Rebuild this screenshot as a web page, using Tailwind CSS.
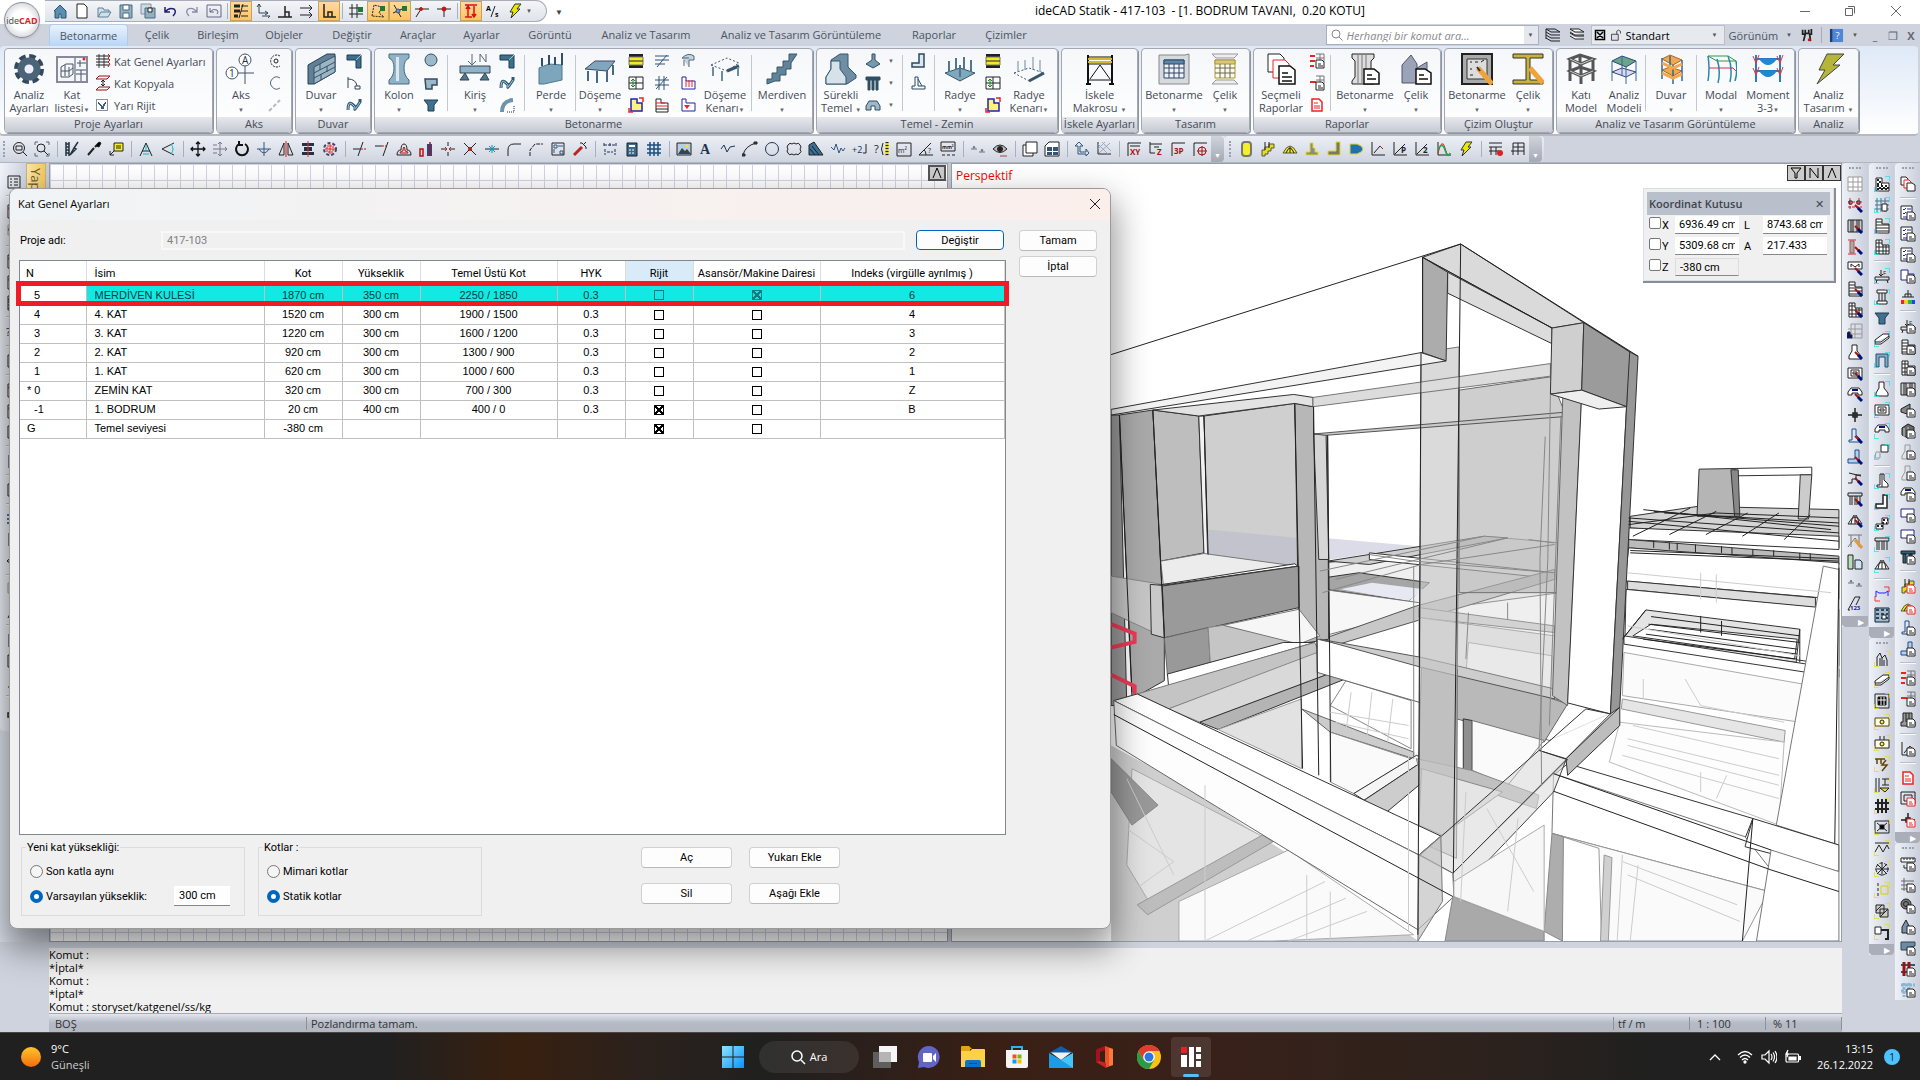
<!DOCTYPE html>
<html lang="tr">
<head>
  <meta charset="UTF-8">
  <meta name="viewport" content="width=device-width, initial-scale=1.0">
  <title>ideCAD Statik - 417-103</title>
  <script src="https://cdn.jsdelivr.net/npm/@tailwindcss/browser@4"></script>
</head>
<body class="h-screen overflow-hidden flex flex-col bg-[#ced3dd] font-['Open_Sans','Noto_Sans',sans-serif] text-[11px] leading-[13px] text-black relative">

  <!-- Title bar -->
  <header class="relative shrink-0">
    <div class="h-6 bg-white flex items-start pl-[45px]">
      <div class="h-[22px] flex items-center pl-1 pr-1 rounded-r-full border border-l-0 border-[#a9adb5] bg-linear-to-b from-[#f4f5f8] to-[#dfe3ea]" data-quick="home new open save saveall undo redo undobox | *layers move3 perp parallel *ortho | gridlock *polylock *snaplock cross1 cross2 | *heights as bolt"></div>
      <button class="ml-2 mt-2 text-[8px] leading-none text-[#444]" aria-label="Özelleştir">▼</button>
      <h1 class="flex-1 text-[12px] leading-[22px] pl-[472px] whitespace-pre">ideCAD Statik - 417-103  - [1. BODRUM TAVANI,  0.20 KOTU]</h1>
      <div class="flex h-[22px] items-center text-[#666]">
        <button class="w-[45px] grid place-items-center" aria-label="Küçült"><svg class="size-3" viewBox="0 0 12 12" fill="none" stroke="currentColor"><path d="M1 6.500h10"/></svg></button>
        <button class="w-[45px] grid place-items-center" aria-label="Geri yükle"><svg class="size-3" viewBox="0 0 12 12" fill="none" stroke="currentColor"><path d="M1.500 3.500h7v7h-7zM4 1.500h6.500v7"/></svg></button>
        <button class="w-[48px] grid place-items-center" aria-label="Kapat"><svg class="size-3" viewBox="0 0 12 12" fill="none" stroke="currentColor"><path d="M1 1l10 10M11 1L1 11"/></svg></button>
      </div>
    </div>
    <button class="absolute left-1 top-[2px] size-9 rounded-full border border-[#8b8f98] bg-radial from-white from-40% to-[#b9bdc6] shadow text-[9px] leading-none text-[#444]">ide<b class="text-[#d22]">CAD</b></button>

    <!-- Ribbon tabs -->
    <nav class="h-[22px] flex items-end pl-[49px] text-[#4b5563] whitespace-nowrap">
      <a href="#betonarme" class="h-[22px] w-[79px] text-center leading-[22px] rounded-t bg-linear-to-b from-[#e9f2fc] to-[#b9d6f6] border border-b-0 border-[#b4cbe6]">Betonarme</a>
      <a href="#celik" class="w-[58px] text-center leading-[22px]">Çelik</a>
      <a href="#birlesim" class="w-16 text-center leading-[22px]">Birleşim</a>
      <a href="#objeler" class="w-[68px] text-center leading-[22px]">Objeler</a>
      <a href="#degistir" class="w-[68px] text-center leading-[22px]">Değiştir</a>
      <a href="#araclar" class="w-16 text-center leading-[22px]">Araçlar</a>
      <a href="#ayarlar" class="w-[63px] text-center leading-[22px]">Ayarlar</a>
      <a href="#goruntu" class="w-[74px] text-center leading-[22px]">Görüntü</a>
      <a href="#analiz" class="w-[118px] text-center leading-[22px]">Analiz ve Tasarım</a>
      <a href="#analiz-goruntuleme" class="w-[192px] text-center leading-[22px]">Analiz ve Tasarım Görüntüleme</a>
      <a href="#raporlar" class="w-[74px] text-center leading-[22px]">Raporlar</a>
      <a href="#cizimler" class="w-[70px] text-center leading-[22px]">Çizimler</a>
      <div class="ml-auto h-[22px] flex items-center text-[#333]">
        <label class="h-5 w-[213px] flex items-center border border-[#aab0bb] bg-white">
          <svg class="size-3 ml-1 text-[#888]" viewBox="0 0 12 12" fill="none" stroke="currentColor"><circle cx="5" cy="5" r="4"/><path d="M8 8l3.500 3.500"/></svg>
          <input type="search" placeholder="Herhangi bir komut ara..." aria-label="Komut ara" class="flex-1 min-w-0 px-1 italic outline-none placeholder:text-[#888]">
          <span class="h-full w-[14px] bg-[#e4e7ed] grid place-items-center text-[6px] text-[#555]">▼</span>
        </label>
        <div class="flex gap-2 px-[6px]"><svg class="size-4" data-i="stackb"></svg><svg class="size-4" data-i="stack"></svg></div>
        <div class="h-5 w-[134px] flex items-center gap-1 px-[2px] bg-[#e6e9ee] border border-[#b9bec8] text-black">
          <svg class="size-3" data-i="xbox"></svg><svg class="size-3" data-i="lock"></svg>
          <select aria-label="Stil" class="flex-1 appearance-none outline-none"><option>Standart</option></select>
          <span class="text-[6px] text-[#555] pr-1">▼</span>
        </div>
        <button class="pl-1 text-[#4b5563]">Görünüm</button><span class="text-[6px] px-2 text-[#555]">▼</span>
        <svg class="size-[14px]" data-i="tools"></svg>
        <span class="mx-[7px] w-px h-4 bg-[#aab]"></span>
        <svg class="size-[15px]" data-i="help"></svg><span class="text-[6px] px-2 text-[#555]">▼</span>
        <button class="w-[18px] font-bold text-[#667]" aria-label="Alt pencere küçült">_</button>
        <button class="w-[18px] text-[#667]" aria-label="Alt pencere geri yükle">❐</button>
        <button class="w-[18px] font-bold text-[#667]" aria-label="Alt pencere kapat">X</button>
      </div>
    </nav>

    <!-- Ribbon groups -->
    <div id="ribbon" class="h-[90px] mr-[2px] flex gap-[3px] items-start pl-1 pt-[2px] rounded bg-linear-to-b from-[#dfe9f7] to-white border-b-2 border-[#b5b9c1] text-[#444b55] whitespace-nowrap"></div>

    <!-- Tool strips -->
    <div class="h-[27px] flex items-center bg-[#ced3dd] border-b border-[#b0b5bf]">
      <div class="h-[26px] flex items-center rounded-r bg-linear-to-b from-[#eceff6] to-[#cfd5e0]" data-bar="zoomin zoomwin | pickbrush dropper note | compass eye | move movegrid rotate rotaxis mirror align explode | trim extend offset mark breakx breakc breakp fillet fillet2 region wand | dims calc grid | image letter poly arc circle cloud hatch zigzag plus2 ask sqm angle mm2 | level eye2 | copy1 copy4 | arrowup meshx | dXY dZ d3P dC"></div>
      <div class="h-[26px] flex items-center rounded-r bg-linear-to-b from-[#eceff6] to-[#cfd5e0]" data-bar="ycol ystair ydome yfound ywall ybody gr1 gr2 gr3 gr4 bolt | tred table"></div>
    </div>
  </header>

  <!-- Work area -->
  <main class="flex-1 min-h-0 flex">
    <div class="flex-1 min-w-0 flex flex-col">
      <div class="flex-1 min-h-0 flex">
        <aside class="w-[49px] shrink-0 flex bg-linear-to-r from-[#dde2ec] to-[#c6cbd6]">
          <div class="w-[26px] h-[568px] flex flex-col items-center pl-[2px] pt-2 rounded-b bg-linear-to-r from-[#f0f3f9] to-[#cdd3df]" data-col="list - chk:r slabg:r - chk:r chk:r slab:r - ask - list - chk:r chk:r list - calc - list - grid tree eye2 - slabg compass - calc list pier - wall:doc"></div>
          <div class="w-5 h-28 border border-[#c9b27a] bg-linear-to-r from-[#fbe6a6] to-[#f3c95f] text-[13px] leading-[18px] text-[#6b5a2c] [writing-mode:vertical-rl] whitespace-nowrap pt-1">Yapı denetimi</div>
        </aside>
        <section class="flex-1 min-w-0 flex gap-[3px] bg-[#c3c8d2]">
          <div class="w-[899px] border border-[#989da8] bg-white bg-[linear-gradient(to_right,#d3d3e6_1px,transparent_1px),linear-gradient(to_bottom,#d3d3e6_1px,transparent_1px)] bg-[size:13px_16px] flex justify-end p-[1px]">
            <button class="w-[18px] h-4 border-2 border-[#555] bg-[#ccc] grid place-items-center" aria-label="Büyüt"><svg class="size-3" viewBox="0 0 12 12" fill="none" stroke="#000"><path d="M2 11L6 1l4 10"/></svg></button>
          </div>
          <div class="flex-1 min-w-0 relative border border-[#989da8] bg-white overflow-hidden">
            <svg id="model" class="absolute inset-0 size-full" viewBox="-285 9 1704 2340" preserveAspectRatio="none" fill="none" stroke="#222" aria-label="Perspektif model"></svg>
            <p class="absolute left-1 top-[5px] text-[12px] text-[#f00]">Perspektif</p>
            <div class="absolute right-0 top-[1px] flex">
              <button class="w-[18px] h-4 border border-[#333] bg-[#ccc] grid place-items-center" aria-label="Filtre"><svg class="size-3" viewBox="0 0 12 12" fill="none" stroke="#000"><path d="M1 1h10L7 6v5H5V6z"/></svg></button>
              <button class="w-[18px] h-4 border border-[#333] bg-[#ccc] grid place-items-center" aria-label="Normal"><svg class="size-3" viewBox="0 0 12 12" fill="none" stroke="#000"><path d="M2 11V1l8 10V1"/></svg></button>
              <button class="w-[18px] h-4 border border-[#333] bg-[#ccc] grid place-items-center" aria-label="Büyüt"><svg class="size-3" viewBox="0 0 12 12" fill="none" stroke="#000"><path d="M2 11L6 1l4 10"/></svg></button>
            </div>
            <!-- Coordinate box -->
            <div class="absolute right-[7px] top-6 w-[191px] h-[93px] p-[3px] bg-[#f0f0f0] border border-[#d8dfea] shadow-[1px_1px_0_1px_#888d96]">
              <div class="h-[23px] px-[2px] flex items-center justify-between bg-[#b9c0cc] font-semibold text-[#40444c]"><span>Koordinat Kutusu</span><button class="pr-1 font-normal" aria-label="Kutuyu kapat">✕</button></div>
              <div class="grid grid-cols-[12px_14px_64px_24px_64px] items-center gap-y-[3px] pl-[2px] pt-[1px] font-[Roboto,sans-serif]">
                <input id="cx" type="checkbox" class="appearance-none size-3 border border-[#777] rounded-xs bg-white -mt-1"><label for="cx" class="pl-px">X</label><input aria-label="X" value="6936.49 cm" class="h-[18px] px-1 min-w-0 bg-white border-b border-[#888]"><label for="cl" class="pl-[5px]">L</label><input id="cl" value="8743.68 cm" class="h-[18px] px-1 min-w-0 bg-white border-b border-[#888]">
                <input id="cy" type="checkbox" class="appearance-none size-3 border border-[#777] rounded-xs bg-white -mt-1"><label for="cy" class="pl-px">Y</label><input aria-label="Y" value="5309.68 cm" class="h-[18px] px-1 min-w-0 bg-white border-b border-[#888]"><label for="ca" class="pl-[5px]">A</label><input id="ca" value="217.433" class="h-[18px] px-1 min-w-0 bg-white border-b border-[#888]">
                <input id="cz" type="checkbox" class="appearance-none size-3 border border-[#777] rounded-xs bg-white -mt-1"><label for="cz" class="pl-px">Z</label><input aria-label="Z" value="-380 cm" class="h-[18px] px-1 min-w-0 bg-[#f0f0f0] border border-[#ddd] border-b-[#888]">
              </div>
            </div>
          </div>
        </section>
      </div>
      <!-- Command log and status bar -->
      <div class="h-[65px] shrink-0 ml-[49px] mt-[6px] bg-[#f0f0f0]">
        <p>Komut :</p><p>*İptal*</p><p>Komut :</p><p>*İptal*</p><p>Komut : storyset/katgenel/ss/kg</p>
      </div>
      <footer class="h-[19px] shrink-0 ml-[49px] flex items-center border-t border-[#a5a9b3] bg-linear-to-b from-[#e3e6ed] via-[#b4bac6] to-[#b3b8c0] text-[#333]">
        <span class="w-[258px] pl-[6px] border-r border-[#8d929c]">BOŞ</span>
        <span class="flex-1 pl-1">Pozlandırma tamam.</span>
        <span class="w-[76px] pl-1 border-l border-[#8d929c]">tf / m</span>
        <span class="w-[76px] pl-[7px] border-l border-[#8d929c]">1 : 100</span>
        <span class="w-[77px] pl-[7px] border-x border-[#8d929c]">% 11</span>
      </footer>
    </div>
    <aside class="flex shrink-0 items-start gap-[1px] w-[78px]">
      <div class="w-[26px] flex flex-col items-center rounded-t bg-linear-to-r from-[#eef1f7] to-[#c9cfdb]" data-col=": tableg chkr:brush colg:brush redcol:brush beam:brush slab:brush mesh:brush tableb footing:brush raft:brush cap:brush plus pierb:brush wallb:brush stair:brush pile:brush dome:brush truss half level num ]"></div>
      <div class="w-[25px] flex flex-col items-center">
        <div class="w-full flex flex-col items-center rounded-t bg-linear-to-r from-[#eef1f7] to-[#c9cfdb]" data-col=": chk:cy meshc:cy slab:cy mesh:cy - beamF:cy colm:cy funnel beam3:cy gate:cy - footing:cy raft:cy cap:cy step:cy - pier:cy wall:cy chk2:cy pile:cy dome:cy - polyr chkc ]"></div>
        <div class="w-full flex flex-col items-center rounded-t bg-linear-to-r from-[#eef1f7] to-[#c9cfdb]" data-col=": towers:ye beam3:ye meshk:ye plate:ye plate2:ye wel:ye ibeam:ye rail:ye xbase:ye zig:ye star:ye dash:ye hatch2:ye hammer:ye ]"></div>
      </div>
      <div class="w-[25px] flex flex-col items-center">
        <div class="w-full flex flex-col items-center rounded-t bg-linear-to-r from-[#eef1f7] to-[#c9cfdb]" data-col=": docs - tick:doc tick:doc tick:doc lshape:doc rainbow - beamF:doc slab:doc mesh:doc colg:doc cone:doc barrel:doc footg:doc footg:doc cap:doc rect:doc rect:doc pileb:doc - ystair:rdoc ydome:rdoc pierb:doc wallb:doc - redarr:doc redarr1:doc cyl:doc - gr1:doc - rdoc rect2:rdoc plus:rdoc ]"></div>
        <div class="w-full flex flex-col items-center rounded-t bg-linear-to-r from-[#eef1f7] to-[#c9cfdb]" data-col=": ruler:doc arrows:doc disc:doc towerb:doc pipe:doc gridr:doc gridb:doc"></div>
      </div>
    </aside>
  </main>

  <!-- Storey settings dialog -->
  <section role="dialog" aria-label="Kat Genel Ayarları" class="absolute left-[9px] top-[188px] w-[1102px] rounded-lg border border-[#9a9a9a] bg-[#f0f0f0] shadow-[0_16px_34px_4px_rgba(0,0,0,0.42)] overflow-hidden text-black font-[Roboto,sans-serif]">
    <div class="h-[31px] flex items-center justify-between px-2 pb-[2px] bg-linear-to-r from-[#f0f4f6] to-[#fbefec]">
      <h2 class="font-['Open_Sans',sans-serif]">Kat Genel Ayarları</h2>
      <button class="pr-[1px]" aria-label="Kapat"><svg class="size-3" viewBox="0 0 12 12" fill="none" stroke="#222"><path d="M1 1l10 10M11 1L1 11"/></svg></button>
    </div>
    <div class="flex pt-[10px] pl-[9px]">
      <div class="w-[987px]">
        <div class="flex items-center h-5">
          <label for="proje" class="w-[142px] pl-[1px]">Proje adı:</label>
          <input id="proje" value="417-103" disabled class="h-[19px] flex-1 px-1 text-[#808080] bg-[#f0f0f0] border-2 border-[#f8f8f8]">
          <button class="ml-[11px] mr-[2px] w-[88px] h-5 rounded-[4px] border border-[#0067c0] bg-[#fdfdfd]">Değiştir</button>
        </div>
        <div class="relative mt-[10px] h-[575px] border border-[#828790] bg-white">
          <table class="table-fixed w-[984px] border-collapse">
            <colgroup><col class="w-[66px]"><col class="w-[178px]"><col class="w-[78px]"><col class="w-[78px]"><col class="w-[137px]"><col class="w-[68px]"><col class="w-[68px]"><col class="w-[127px]"><col class="w-[184px]"></colgroup>
            <thead>
              <tr class="h-[25px] [&>th]:font-normal [&>th]:border-r [&>th]:border-[#dcdcdc]">
                <th class="text-left pl-[6px]">N</th><th class="text-left pl-2">İsim</th><th>Kot</th><th>Yükseklik</th><th>Temel Üstü Kot</th><th>HYK</th><th class="bg-[#d9eaf8]">Rijit</th><th>Asansör/Makine Dairesi</th><th>Indeks (virgülle ayrılmış )</th>
              </tr>
            </thead>
            <tbody id="floors" class="font-['Liberation_Sans',sans-serif] text-center"></tbody>
          </table>
          <div class="absolute -left-1 -right-1 top-5 h-[25px] border-[5px] border-[#f01b24] pointer-events-none"></div>
        </div>
      </div>
      <div class="ml-[13px] w-[78px] flex flex-col gap-[5px]">
        <button class="h-[21px] rounded-[4px] border border-[#d0d0d0] border-b-[#b8b8b8] bg-[#fdfdfd]">Tamam</button>
        <button class="h-[21px] rounded-[4px] border border-[#d0d0d0] border-b-[#b8b8b8] bg-[#fdfdfd]">İptal</button>
      </div>
    </div>
    <div class="flex pl-[11px] pt-[6px] pb-3">
      <fieldset class="w-[224px] h-[75px] border border-[#dcdcdc] pl-2">
        <legend class="px-[1px] -ml-1">Yeni kat yüksekliği:</legend>
        <label class="flex items-center gap-[3px] h-[18px] mt-[8px]"><input type="radio" name="yuk" class="appearance-none size-[13px] rounded-full border border-[#777] bg-[#f5f5f5]">Son katla aynı</label>
        <div class="flex items-center mt-[6px] h-[20px]">
          <label class="flex items-center gap-[3px] w-[144px]"><input type="radio" name="yuk" checked class="appearance-none size-[13px] rounded-full border-4 border-[#0067c0] bg-white">Varsayılan yükseklik:</label>
          <input aria-label="Varsayılan yükseklik" value="300 cm" class="w-14 h-5 px-[5px] bg-white border-b border-[#868686]">
        </div>
      </fieldset>
      <fieldset class="ml-[13px] w-[224px] h-[75px] border border-[#dcdcdc] pl-2">
        <legend class="px-[1px] -ml-1">Kotlar :</legend>
        <label class="flex items-center gap-[3px] h-[18px] mt-[8px]"><input type="radio" name="kot" class="appearance-none size-[13px] rounded-full border border-[#777] bg-[#f5f5f5]">Mimari kotlar</label>
        <label class="flex items-center gap-[3px] mt-[6px] h-5"><input type="radio" name="kot" checked class="appearance-none size-[13px] rounded-full border-4 border-[#0067c0] bg-white">Statik kotlar</label>
      </fieldset>
      <div class="ml-[159px] mt-[6px] grid grid-cols-[91px_91px] auto-rows-[21px] gap-x-[17px] gap-y-[15px]">
        <button class="rounded-[4px] border border-[#d0d0d0] border-b-[#b8b8b8] bg-[#fdfdfd]">Aç</button>
        <button class="rounded-[4px] border border-[#d0d0d0] border-b-[#b8b8b8] bg-[#fdfdfd]">Yukarı Ekle</button>
        <button class="rounded-[4px] border border-[#d0d0d0] border-b-[#b8b8b8] bg-[#fdfdfd]">Sil</button>
        <button class="rounded-[4px] border border-[#d0d0d0] border-b-[#b8b8b8] bg-[#fdfdfd]">Aşağı Ekle</button>
      </div>
    </div>
  </section>

  <!-- Taskbar -->
  <div class="h-12 shrink-0 flex items-center border-t border-[#4a4442] text-white text-[11px] leading-4 bg-[linear-gradient(to_right,#202020_0%,#202020_20%,#38200f_27%,#2c211c_33%,#202020_40%,#3a1f14_52%,#38211a_64%,#2c221d_78%,#202020_86%)]">
    <div class="flex-1 flex items-center pl-[21px] gap-[10px]">
      <span class="size-5 rounded-full bg-linear-to-b from-[#fdc52c] to-[#f26a0c]"></span>
      <p>9°C<br><span class="text-[#ccc]">Güneşli</span></p>
    </div>
    <div class="flex items-center">
      <button class="w-11 h-10 grid place-items-center" aria-label="Başlat"><svg class="size-6" viewBox="0 0 24 24"><defs><linearGradient id="w" x2="1" y2="1"><stop stop-color="#8be4ff"/><stop offset="1" stop-color="#0a93ff"/></linearGradient></defs><path fill="url(#w)" d="M1 1h10.500v10.500H1zM12.500 1H23v10.500H12.500zM1 12.500h10.500V23H1zM12.500 12.500H23V23H12.500z"/></svg></button>
      <button class="mx-1 w-[100px] h-8 rounded-full bg-white/8 flex items-center justify-center gap-1"><svg class="size-4" viewBox="0 0 16 16" fill="none" stroke="#fff" stroke-width="1.500"><circle cx="7" cy="7" r="5"/><path d="M11 11l4 4"/></svg>Ara</button>
      <button class="w-11 h-10 grid place-items-center" aria-label="Görev görünümü"><svg class="size-6" viewBox="0 0 24 24"><path fill="#f6f6f6" d="M6 1h18v16H6z"/><path fill="#6a6a6a" fill-opacity=".85" d="M0 7h18v16H0z"/><path fill="#b5b5b5" d="M6 7h12v10H6z"/></svg></button>
      <button class="w-11 h-10 grid place-items-center" aria-label="Sohbet"><svg class="size-6" viewBox="0 0 24 24"><path fill="#6264c7" d="M12 1a11 11 0 1 1-5 21L1 23l1-6A11 11 0 0 1 12 1z"/><rect x="6" y="8" width="9" height="9" rx="1" fill="#fff"/><path fill="#fff" d="M16 11l3-3v9l-3-3z"/></svg></button>
      <button class="w-11 h-10 grid place-items-center" aria-label="Dosya Gezgini"><svg class="size-6" viewBox="0 0 24 24"><path fill="#e5a50a" d="M0 2q0-1 1-1h7l3 3h-2v4H0z"/><path fill="#ffd04a" d="M0 6h9l2-2h12q1 0 1 1v17H0z"/><path fill="#0c74c6" d="M4 22v-5q0-2 2-2h12q2 0 2 2v5z"/><path fill="#0a4f92" d="M8 18h8v1H8z"/></svg></button>
      <button class="w-11 h-10 grid place-items-center" aria-label="Mağaza"><svg class="size-6" viewBox="0 0 24 24"><path fill="none" stroke="#29b6f0" stroke-width="2" d="M7 7V2h10v5"/><path fill="#f4f4f4" d="M1 5h22v16q0 2-2 2H3q-2 0-2-2z"/><path fill="#f25022" d="M7.500 9.500h4v4h-4z"/><path fill="#7fba00" d="M12.500 9.500h4v4h-4z"/><path fill="#00a4ef" d="M7.500 14.500h4v4h-4z"/><path fill="#ffb900" d="M12.500 14.500h4v4h-4z"/></svg></button>
      <button class="w-11 h-10 grid place-items-center" aria-label="Posta"><svg class="size-6" viewBox="0 0 24 24"><path fill="#0b5fae" d="M0 8l12-7 12 7z"/><path fill="#f2f2f2" d="M2 7.500h20L12 15z"/><path fill="#1c9be6" d="M0 8l12 7 12-7v15H0z"/><path fill="#45c5f7" d="M24 8v15L12 15z"/></svg></button>
      <button class="w-11 h-10 grid place-items-center" aria-label="Office"><svg class="size-6" viewBox="0 0 24 24"><path fill="#a4121e" d="M12 1L4 4q-1 1-1 2v11l4 2V7l5-2z"/><path fill="#e8532b" d="M12 1l8 3v16l-8 3z"/><path fill="#ff7a3a" d="M16 3l4 1v16l-4 1z"/><path fill="#c22" d="M3 17l4-1 6 2v5z"/></svg></button>
      <button class="w-11 h-10 grid place-items-center" aria-label="Chrome"><svg class="size-6" viewBox="0 0 24 24"><circle cx="12" cy="12" r="12" fill="#fbc116"/><path fill="#e33b2e" d="M1.600 6A12 12 0 0 1 22.400 6H12L6.800 15z"/><path fill="#2a9a44" d="M1.600 6A12 12 0 0 0 12 24l5.200-9H6.800z"/><circle cx="12" cy="12" r="5.800" fill="#fff"/><circle cx="12" cy="12" r="4.500" fill="#2f76e0"/></svg></button>
      <button class="w-10 h-10 rounded bg-white/10 grid place-items-center relative" aria-label="ideCAD"><svg class="size-5" viewBox="0 0 20 20"><path fill="#e8202a" d="M0 0h6v6H0z"/><path fill="#fff" d="M0 8h6v12H0zM8 0h5v20H8zM15 0h5v5h-5zM15 7h5v5h-5zM15 14h5v6h-5z"/></svg><span class="absolute bottom-0 w-4 h-[3px] rounded bg-[#4cc2ff]"></span></button>
    </div>
    <div class="flex-1 flex items-center justify-end gap-2 pr-5">
      <svg class="w-3 h-3 mr-2" viewBox="0 0 12 12" fill="none" stroke="#fff" stroke-width="1.300"><path d="M1 9l5-5 5 5"/></svg>
      <svg class="size-4" viewBox="0 0 16 16" fill="none" stroke="#fff" stroke-width="1.300"><path d="M1 6q7-7 14 0M3 8.500q5-5 10 0M5 11q3-3 6 0"/><circle cx="8" cy="13" r="1" fill="#fff"/></svg>
      <svg class="size-4" viewBox="0 0 16 16" fill="none" stroke="#fff" stroke-width="1.200"><path d="M1 6h3l4-4v12l-4-4H1zM10 5q2 3 0 6M12 3.500q3 4.500 0 9M14 2q4 6 0 12"/></svg>
      <svg class="size-4 mr-2" viewBox="0 0 16 16" fill="none" stroke="#fff" stroke-width="1.200"><rect x="1" y="5" width="12.500" height="8" rx="1"/><path fill="#fff" d="M4 8h7v3H4zM14 7.500h1.500v3H14zM3 1L1 5h2l-1 3"/></svg>
      <p class="text-right mr-[3px]">13:15<br>26.12.2022</p>
      <span class="size-4 rounded-full bg-[#4cc2ff] text-[#123] text-[10px] text-center leading-4">1</span>
    </div>
  </div>

  <script>
    // Small icons, 16 x 16
    const ICON = {
      home: '<path d="M2 8l6-6 6 6v7H9v-4H7v4H3V8z" fill="#5b8fb0" stroke="#2d5570"/>',
      new: '<path d="M3 1h7l3 3v11H3z" fill="#fff"/>',
      open: '<path d="M2 14V5h5l1 2h5v2M2 14l3-5h10l-3 5z" fill="#cfe0ea" stroke="#5c8096"/>',
      save: '<path d="M2 2h12v13H2z" fill="#93b0c2" stroke="#4b6b80"/><path d="M5 2h6v5H5zM5 10h6v5H5z" fill="#fff" stroke="#4b6b80"/>',
      saveall: '<path d="M1 1h10v10H1z" fill="#cfdbe4" stroke="#7b96a8"/><path d="M5 5h10v10H5z" fill="#93b0c2" stroke="#4b6b80"/><path d="M8 5h4v4H8z" fill="#fff"/>',
      undo: '<path d="M3 4v5h5M3 9q4-5 9-3 3 3-1 7" stroke="#20206e" stroke-width="1.500"/>',
      redo: '<path d="M13 4v5H8M13 9Q9 4 4 6q-3 3 1 7" stroke="#8b8ba8" stroke-width="1.300"/>',
      undobox: '<path d="M1 2h14v12H1z" stroke="#668"/><path d="M4 5v4h4M4 9q3-4 7-2 2 2 0 4" stroke="#668"/>',
      layers: '<path d="M1 3h6M1 8h6M1 13h4" stroke-width="3"/><path d="M8 3h7M8 8h7M8 13h7M10 1L6 15"/>',
      move3: '<path d="M4 10V1M2 4l2-3 2 3M4 10h9M10 8l3 2-3 2M7 13h8l-2 2" stroke="#345"/>',
      perp: '<path d="M1 14h14M8 3v11M8 9h4v5" stroke-width="1.500"/>',
      parallel: '<path d="M1 5h12M10 2l3 3-3 3M1 12h12M10 9l3 3-3 3"/>',
      ortho: '<path d="M3 1v13h12M7 14V9h4v5" stroke-width="1.500"/>',
      gridlock: '<path d="M4 1v14M9 1v14M1 5h14M1 11h14"/><path d="M10 4h5v5h-5z" fill="#1a7a3a" stroke="none"/>',
      polylock: '<path d="M2 13L4 2l8 2-3 6 5 4z" stroke-dasharray="2 1"/><path d="M10 3h5v5h-5z" fill="#1a7a3a" stroke="none"/>',
      snaplock: '<path d="M2 2l7 12M1 10l9-4"/><circle cx="6" cy="8" r="2" fill="#69c" stroke="#357"/><path d="M10 3h5v5h-5z" fill="#1a7a3a" stroke="none"/>',
      cross1: '<path d="M1 6h14M2 14l5-8"/><circle cx="7" cy="6" r="1.500" fill="#c11" stroke="#c11"/>',
      cross2: '<path d="M1 6h14M8 6v8"/><circle cx="8" cy="6" r="2" fill="#c11" stroke="#c11"/>',
      heights: '<path d="M2 2h12M2 14h7M5 14V3M3 6l2-3 2 3M11 3v11M9 11l2 3 2-3" stroke="#d11" stroke-width="1.500"/>',
      as: '<path d="M10 3L6 14"/><text x="1" y="8" font-size="7" font-weight="bold" fill="#000" stroke="none">A</text><text x="10" y="14" font-size="7" font-weight="bold" fill="#000" stroke="none">s</text>',
      bolt: '<path d="M8 1h6l-4 5h3L4 15l2-6H3z" fill="#e8e800" stroke="#333"/>',
      stack: '<path d="M1 2h9l5 3H6zM1 6l5 3h9M1 9l5 3h9M1 5l5 3h9" fill="#fff"/>',
      stackb: '<path d="M1 2h9l5 3H6zM1 5l5 3h9M1 8l5 3h9M1 11l5 3h9M1 2v10" fill="#bcd0e6"/>',
      xbox: '<path d="M2 2h12v12H2zM4 4l8 8M12 4l-8 8" stroke="#000" stroke-width="2"/>',
      lock: '<path d="M2 7h9v8H2z" fill="#dde"/><path d="M9 7V3q2-3 5 0v3"/>',
      tools: '<path d="M3 2v5h3l-2 8M6 2v4h4V2M13 1v6h-2l1 8" stroke-width="2"/><path d="M9 12h3v3H9z" fill="#d11" stroke="none"/>',
      help: '<path d="M1 1h3v14H1z" fill="#1c3e7a" stroke="none"/><path d="M4 1h11v14H4z" fill="#4f86d8" stroke="none"/><text x="7" y="12" font-size="10" fill="#fff" stroke="none">?</text>',
      zoomin: '<circle cx="7" cy="7" r="5.500"/><path d="M11 11l4 4M4 5h6v4H4z"/>',
      zoomwin: '<path d="M1 4V1h3M12 1h3v3M15 12v3h-3M4 15H1v-3" stroke="#567"/><circle cx="7" cy="7" r="4"/><path d="M10 10l4 4"/>',
      pickbrush: '<path d="M2 1v14M5 1v14M2 3h3M2 6h3M2 9h3M2 12h3M14 1l-4 6M6 14l4-7 2 1z" stroke="#234" stroke-width="1.500"/>',
      dropper: '<path d="M2 14l6-7M9 6l4-4" stroke-width="2"/><path d="M10 5l3 1 2-4-2-1z" fill="#000"/>',
      note: '<path d="M6 2h9v8H6z" fill="#f7ee2e"/><path d="M8 5h5M8 7h5M6 10l-4 4M2 10v4h4"/>',
      compass: '<path d="M8 2L2 15M8 2l6 13M4 10h8"/><path d="M8 4v6M5 13h6" stroke="#0bc"/>',
      eye: '<path d="M14 2L2 8l12 6"/><path d="M11 3q4 5 0 10" stroke="#0bc"/>',
      move: '<path d="M8 1v14M1 8h14M6 3l2-2 2 2M6 13l2 2 2-2M3 6L1 8l2 2M13 6l2 2-2 2" stroke="#111" stroke-width="1.300"/>',
      movegrid: '<path d="M8 1v14M1 8h14M1 4h4M1 12h4M6 3l2-2 2 2M6 13l2 2 2-2M13 6l2 2-2 2" stroke="#778"/>',
      rotate: '<path d="M5 3a6 6 0 1 0 6 0M5 0v4h4" stroke="#111" stroke-width="2"/>',
      rotaxis: '<path d="M8 1v14M1 8h14M3 8q5 8 10 0" stroke="#357"/>',
      mirror: '<path d="M6 2v12H1zM10 2v12h5z"/><path d="M8 0v16" stroke="#d11"/>',
      align: '<path d="M2 2h12v3H2zM2 11h12v3H2zM4 6h8v4H4z" fill="#234" stroke="none"/><path d="M8 0v16" stroke="#f22"/>',
      explode: '<circle cx="8" cy="8" r="6" stroke="#446" stroke-width="2" stroke-dasharray="3 2"/><path d="M5 5h6v6H5z" stroke="#e22" stroke-dasharray="2 1"/><path d="M8 3v10M3 8h10" stroke="#e22"/>',
      trim: '<path d="M1 8h7M11 1L6 15"/><path d="M9 8h6" stroke="#b11" stroke-dasharray="2 1"/>',
      extend: '<path d="M1 5h7M14 1L9 15"/><path d="M8 5h4" stroke="#b11" stroke-dasharray="2 1"/>',
      offset: '<path d="M1 14q0-5 4-5 0-6 3-6t3 6q4 0 4 5z"/><path d="M4 12q0-2 3-2 0-4 1-4t1 4q3 0 3 2z" stroke="#b11"/>',
      mark: '<path d="M9 3h5v12H9z" fill="#224a8a" stroke="none"/><path d="M2 8v7h3V8zM12 1v14" stroke="#b11" stroke-width="1.500"/>',
      breakx: '<path d="M1 8h5M10 8h5M8 1v4M8 11v4"/><path d="M5 6l2 2-2 2M11 6L9 8l2 2" stroke="#b22"/>',
      breakc: '<path d="M2 2l12 12M14 2L2 14"/><circle cx="8" cy="8" r="1.500" fill="#b22" stroke="#b22"/>',
      breakp: '<path d="M1 8h14"/><path d="M5 5l6 6M11 5l-6 6M8 4v8" stroke="#09b"/>',
      fillet: '<path d="M2 15V9q0-6 6-6h7"/>', fillet2: '<path d="M2 15V9l5-6h8" stroke-dasharray="4 1"/>',
      region: '<path d="M2 2h12v12H2z"/><path d="M4 4h3v3H4zM10 10h3v3h-3zM4 12V8M8 5h5" stroke="#357"/>',
      wand: '<path d="M2 14l8-8" stroke="#b22" stroke-width="3"/><path d="M10 2l4 4M14 1l-3 3M9 1v2M15 7h-2"/>',
      dims: '<path d="M2 4h12M2 2v4M8 2v4M14 2v4M3 8v6M13 8v6M5 11h6" stroke="#235" stroke-dasharray="3 1"/>',
      calc: '<path d="M3 2h10v13H3z" fill="#3d6a8a" stroke="#123"/><path d="M5 4h6v2H5z" fill="#fff" stroke="none"/><path d="M5 9h6M5 12h6" stroke="#fff" stroke-dasharray="2 1"/>',
      grid: '<path d="M4 1v14M8 1v14M12 1v14M1 4h14M1 8h14M1 12h14" stroke="#1c4f7c" stroke-width="1.500"/>',
      image: '<path d="M1 2h14v12H1z" fill="#b9cfe0"/><path d="M2 13l4-6 3 3 2-2 4 5z" fill="#345" stroke="none"/><circle cx="11" cy="5" r="1.500" fill="#fd3" stroke="none"/>',
      letter: '<text x="2" y="13" font-size="14" font-weight="bold" font-family="Liberation Serif" fill="#1c3550" stroke="none">A</text>',
      poly: '<path d="M1 8l3-4 3 7 3-5 5-1" stroke="#235"/>', arc: '<path d="M1 14Q3 5 14 2"/><path d="M0 13h3v2H0zM12 1h3v2h-3z" fill="#357"/>',
      circle: '<circle cx="8" cy="8" r="6.500" stroke="#235"/>',
      cloud: '<path d="M2 4q2-3 4-1 2-2 4 0 3-2 4 1 2 2 0 4 2 3 0 4-2 3-4 1-2 2-4 0-3 2-4-1-2-2 0-4-2-2 0-4z"/>',
      hatch: '<path d="M1 4l5-3 9 13H1z" fill="#3e6f91"/><path d="M2 8l5 6M4 5l7 9" stroke="#123"/>',
      zigzag: '<path d="M1 6l3 3 2-6 3 9 2-5 2 3 2-3" stroke="#357"/>',
      plus2: '<text x="0" y="12" font-size="9" fill="#235" stroke="none">+2</text><path d="M14 3v9h-3"/>',
      ask: '<text x="0" y="12" font-size="11" fill="#222" stroke="none">?</text><path d="M9 2q-3 6 0 12"/><path d="M13 1v14" stroke="#e5d600" stroke-width="3"/><path d="M13 1v14" stroke-dasharray="1 2" stroke-width="3"/>',
      sqm: '<path d="M1 2h14v13H1z"/><text x="2" y="12" font-size="7" fill="#222" stroke="none">m²</text>',
      angle: '<path d="M1 14h14M1 14L13 2M8 14q0-4-2-5"/><text x="10" y="12" font-size="7" fill="#222" stroke="none">?</text>',
      mm2: '<path d="M1 1h14v9H1zM2 14h3M7 14h3M12 14h3"/><text x="2" y="8" font-size="5" font-weight="bold" fill="#222" stroke="none">mm²</text>',
      level: '<path d="M1 8h6M9 11h6M3 7l1-2 1 2zM11 10l1-2 1 2z" stroke="#68727f"/>',
      eye2: '<path d="M1 8q7-8 14 0-7 7-14 0z" fill="#bbb"/><circle cx="8" cy="8" r="2.500" fill="#222"/><path d="M8 15h7" stroke="#a44"/>',
      copy1: '<path d="M1 4h10v11H1z" fill="#fff"/><path d="M4 1h11v11H4z" fill="#fff"/>',
      copy4: '<path d="M5 1h10v14H1V5z" fill="#fff"/><path d="M3 6h5v4H3zM9 6h5v4H9zM3 11h5v3H3zM9 11h5v3H9z" fill="#357" stroke="none"/>',
      arrowup: '<path d="M4 13V5H1l4-4 4 4H6v6h6V8l3 4-3 3v-2z" stroke="#357"/>',
      meshx: '<path d="M2 1v12h13"/><path d="M2 3l10 10M6 1l9 9M14 2L3 12M9 1L2 8" stroke="#9ab"/>',
      dXY: '<path d="M2 15V2h13M4 5h10"/><text x="4" y="14" font-size="8" font-weight="bold" fill="#a11" stroke="none">XY</text>',
      dZ: '<path d="M2 1v11h5M2 3h12M6 6h5"/><text x="9" y="14" font-size="8" font-weight="bold" fill="#a11" stroke="none">Z</text>',
      d3P: '<path d="M2 15V2h13"/><text x="4" y="13" font-size="8" font-weight="bold" fill="#a11" stroke="none">3P</text>',
      dC: '<path d="M2 15V2h13"/><circle cx="10" cy="10" r="4" stroke="#a11"/><path d="M10 5v10M5 10h10" stroke="#a11"/>',
      ycol: '<rect x="4" y="1" width="9" height="14" rx="3" fill="#f5ef2a" stroke="#777" stroke-width="2"/>',
      ystair: '<path d="M2 15V9h3V6h4V3h5v4h-3v3H8v3H5v2z" fill="#e6dd1a" stroke="#554"/><path d="M5 1v8M9 1v6"/>',
      ydome: '<path d="M1 12q7-14 14 0z" fill="#f3eb28" stroke="#554"/><path d="M4 12q4-10 8 0M8 6v6"/>',
      yfound: '<path d="M2 14v-3h4V2h3v5h2v4h3v3z" fill="#8a8a8a" stroke="#e3d91c"/>',
      ywall: '<path d="M10 1h4v13H2v-4h8z" fill="#777" stroke="#e3d91c"/>',
      ybody: '<path d="M2 3h7q6 2 6 5t-6 5H2z" fill="#2270b0" stroke="#e3d91c"/>',
      gr1: '<path d="M2 1v13h13M4 12l6-7 3 3"/><path d="M10 5l3 3" stroke="#c11"/>',
      gr2: '<path d="M2 1v13h13M3 13L13 3"/><text x="9" y="12" font-size="8" font-weight="bold" fill="#222" stroke="none">P</text>',
      gr3: '<path d="M2 1v13h13M3 13L13 3"/><text x="9" y="12" font-size="8" font-weight="bold" fill="#222" stroke="none">2</text>',
      gr4: '<path d="M2 1v13h13"/><path d="M2 12Q6-4 9 7t5 5" stroke="#c22"/><path d="M2 9q4-9 7 0t5 3" stroke="#2a4" stroke-width="1.500"/>',
      tred: '<path d="M1 2h13M1 6h13M3 6v8M8 6v8M1 10h10"/><circle cx="12" cy="12" r="3" fill="#d22" stroke="none"/>',
      table: '<path d="M3 2h11M3 6h11M1 10h13M3 2v12M8 2v12M14 2v12"/>',
      list: '<path d="M2 2h12v12H2zM4 5h2M8 5h4M4 8h2M8 8h4M4 11h2M8 11h4"/>',
      tree: '<path d="M3 1v13h5M3 7h5M9 5h5v4H9zM9 12h5v3H9z"/>',
      // side strips
      tableg: '<path d="M1 1h14v14H1zM6 1v14M11 1v14M1 6h14M1 11h14" fill="#fff" stroke="#999"/>',
      tableb: '<path d="M4 1h11v14H4zM8 1v14M1 6h14M1 11h14" stroke="#999"/><path d="M1 9h2v3h2v3H0v-3z" fill="#00127a"/>',
      chkr: '<path d="M3 1v12M12 1v8M1 5h14M1 10h14" stroke-dasharray="3 1" stroke="#d22"/><path d="M2 4h3v3H2zM10 4h3v3h-3z"/>',
      colg: '<path d="M1 2h14v12H1z" fill="#ccc"/><path d="M4 2v12M6 2v12M10 2v12M12 2v12"/>',
      redcol: '<path d="M1 1h8M1 15h8" stroke="#d22"/><path d="M3 2v12h4V2z" fill="#aaa" stroke="#a55"/>',
      beam: '<path d="M1 2h14v7H1zM4 7V4l4 3 4-3v3" fill="#fff"/>',
      beam3: '<path d="M1 9l8-6h6v4l-8 6H1zM1 11h6l8-6" fill="#fff"/>',
      beamF: '<path d="M1 9h14v3H1zM3 12l-1 3M13 12l1 3M7 2v6M5 6l2 2 2-2"/><text x="9" y="7" font-size="6" fill="#222" stroke="none">F</text>',
      slab: '<path d="M2 1h6v5h7v9H2zM2 4h6M2 7h13M2 10h13M2 13h13" fill="#fff"/>',
      slabg: '<path d="M2 1h9v5h3v5H2z" fill="#ddd" stroke="#999"/>',
      mesh: '<path d="M2 1h6v5h7v9H2zM5 1v14M2 4h6M2 8h13M2 12h13M9 6v9M12 6v9" fill="#fff"/>',
      meshc: '<path d="M3 1v14M7 1v14M11 1v14M1 4h14M1 8h14M1 12h14" stroke="#4b7390"/><path d="M8 7h5v7H8z" fill="#fff"/>',
      footing: '<path d="M5 1h5v6l4 5v3H2v-3l3-5z" fill="#fff"/>',
      footg: '<path d="M5 1h5v6l4 5v3H2v-3l3-5z" stroke="#999"/>',
      raft: '<path d="M1 3h14v10H1zM4 5h8v6H4zM6 7h4v2H6z" fill="#fff"/>',
      cap: '<path d="M1 6l3-4h8l3 4v3h-4V7H5v2H1z" fill="#fff"/><path d="M5 3h6v2H5z" fill="#00127a" stroke="none"/>',
      plus: '<path d="M8 1v14M1 8h14M6 6h4v4H6z" fill="#fff" stroke-width="1.500"/>',
      pier: '<path d="M6 1h4v6l4 4v3H3v-2h3zM8 1v13" fill="#fff"/>', pierb: '<path d="M5 1h4v6l4 4v3H2v-2h3z" fill="#dfe8f2" stroke="#1c4f8c"/>',
      wall: '<path d="M9 1h4v13H2v-4h7z" fill="#fff" stroke-width="1.500"/>', wallb: '<path d="M8 1h4v13H1v-4h7z" stroke="#1c4f8c" fill="#b9cfe6"/>',
      stair: '<path d="M1 13h4V9h4V5h5M2 3l12 3"/>', pile: '<path d="M1 2h14v3H1zM3 5v9M5 5v9M8 5v9M10 5v9M13 5v9"/>',
      pileb: '<path d="M1 2h14v3H1zM3 5h3v9H3zM9 5h3v9H9z" fill="#2d5f7c"/>',
      dome: '<path d="M1 12q7-14 14 0zM4 12q1-7 3-9M12 12Q11 5 9 3M8 3v9" fill="#fff"/>',
      truss: '<path d="M1 2h14M1 14l7-9 7 9M4 2v12M12 2v12" stroke="#777"/><path d="M8 7l7 8" stroke="#e39a3a" stroke-width="3"/>',
      half: '<path d="M1 1h5v14H1z" fill="#b9dcb9"/><path d="M8 6h5l2 2v7H8z" fill="#cfe4f7"/>',
      num: '<path d="M1 14L8 1h5L9 9M1 14h2"/><text x="3" y="14" font-size="6" font-weight="bold" fill="#229" stroke="none">123</text>',
      chk: '<path d="M2 2h6v5h7v8H2z" fill="#fff"/><path d="M3 4h4M3 8h5M3 10h12M3 13h12" stroke-dasharray="2 2" stroke-width="2"/><path d="M5 6h3M5 12h10" stroke-dasharray="2 2" stroke-width="2"/>',
      chk2: '<path d="M2 9h6V3h6v6H9v5H2z" fill="#fff"/><path d="M3 11h6M9 5h5M8 8h5" stroke-dasharray="2 2" stroke-width="2"/>',
      colm: '<path d="M3 1h10v3H3zM3 12h10v3H3zM5 4v8M8 4v8M11 4v8" fill="#fff"/>',
      funnel: '<path d="M1 3h14l-4 5v6H5V8z" fill="#41708f" stroke="#1c3d52"/>',
      gate: '<path d="M2 15V2h12v13h-3V5H5v10z" fill="#8ab" stroke="#1c4f7c"/>',
      step: '<path d="M7 1h7v7H7z" fill="#fff"/><path d="M2 8h4v6H1z" stroke="#999"/>',
      polyr: '<path d="M10 1h5v5M1 10v5h5" stroke="#f33"/><path d="M2 11V5l3 2h6l3-2v5" stroke="#22f"/>',
      chkc: '<path d="M1 1h14v14H1z" fill="#9bb9cf" stroke="#123"/><path d="M2 3h12M2 7h12M2 11h12" stroke="#345" stroke-width="2" stroke-dasharray="3 2"/><path d="M8 8h4v4H8z" fill="#fff"/>',
      towers: '<path d="M3 15V6l3-4 2 5v8M8 7l3-3 2 5v6M6 7v8M10 9v6"/>', meshk: '<path d="M1 1h14v14H1z"/><path d="M4 4h8v8H4z" fill="#000"/><path d="M7 4v8M10 4v8M4 7h8" stroke="#fff"/>',
      plate: '<path d="M1 4h14v8H1z" fill="#fffbe0" stroke="#540"/><circle cx="8" cy="8" r="2" fill="#fe3"/>', plate2: '<path d="M1 5h14v8H1zM6 1v4M10 1v4" fill="#fffbe0"/><circle cx="8" cy="9" r="2" fill="#fe3"/>',
      wel: '<path d="M1 3h10M3 3v5M7 3v5M12 4l-4 5h5l-5 6" stroke="#640" stroke-width="1.500"/>', ibeam: '<path d="M2 1v14M5 1v14M8 2h7M8 8h7M11 2v6"/><path d="M6 11h9l-4 4z" fill="#ed2"/>',
      rail: '<path d="M4 1v14M8 1v14M12 1v14M1 5h14M1 11h14" stroke-width="2"/>', xbase: '<path d="M1 2h14v12H1zM3 4l10 8M13 4L3 12"/><path d="M6 6h4v4H6z" fill="#000"/>',
      zig: '<path d="M1 3h14M1 12l4-7 4 7 4-7 2 4"/>', star: '<circle cx="8" cy="8" r="6" stroke-dasharray="3 2"/><path d="M8 1v14M1 8h14M3 3l10 10M13 3L3 13"/>',
      dash: '<path d="M4 1v14" stroke-dasharray="3 2"/><path d="M7 4h7v8H7z" stroke="#dc0"/>', hatch2: '<path d="M2 2h8v8H2zM6 6h8v8H6z" fill="#ccc"/><path d="M2 8l6-6M6 14l8-8"/>',
      hammer: '<path d="M1 3h6v7H1z" fill="#fff"/><path d="M7 6h7v9h-3" stroke-width="2"/>',
      docs: '<path d="M1 1h5l2 2v6H1z" fill="#fff"/><path d="M4 4h5l2 2v6H4z" fill="#fff" stroke="#e22"/><path d="M7 7h5l3 2v6H7z" fill="#fff"/>',
      tick: '<path d="M1 1h11v13H1z" fill="#fff"/><path d="M3 4l1 1 2-2M7 4h4M3 8l1 1 2-2M3 12h4" stroke="#22a"/>',
      lshape: '<path d="M1 2h7v4h6v6H1z" fill="#fff" stroke="#228"/>',
      rainbow: '<path d="M2 8h12M8 1v7M5 8V5h6v3"/><path d="M1 11h3v4H1z" fill="#e22" stroke="none"/><path d="M4 11h4v4H4z" fill="#fc2" stroke="none"/><path d="M8 11h4v4H8z" fill="#2b4" stroke="none"/><path d="M12 11h3v4h-3z" fill="#24e" stroke="none"/>',
      cone: '<path d="M1 7l9-5v11L1 10z" fill="#888"/>', barrel: '<path d="M2 5l6-4 6 3v9l-6 2-6-3z" fill="#666"/><path d="M4 5v9M8 4v10" stroke="#ccc"/>',
      rect: '<path d="M1 2h13v8H1z" fill="#fff" stroke="#228"/>', rect2: '<path d="M1 1h14v12H1zM4 4h8v6H4z"/>',
      redarr: '<path d="M1 3h5M1 8h5M1 13h4" stroke="#e22" stroke-width="2"/><path d="M7 1h8v8M11 1v8M7 5h8" stroke="#777"/>',
      redarr1: '<path d="M1 7h6" stroke="#e22" stroke-width="2"/><path d="M7 1h8v8M11 1v8M7 5h8" stroke="#777"/>',
      cyl: '<path d="M3 1h9v9h3v4H1v-4h2z" fill="#999"/><path d="M6 1v9M9 1v9"/>',
      ruler: '<path d="M1 2h14v4H1zM4 2v2M7 2v2M10 2v2M13 2v2M4 9v3h3" fill="#fff"/>', arrows: '<path d="M4 1v13M1 4h13M1 8h13M1 12h8" stroke="#666"/>',
      disc: '<circle cx="6" cy="6" r="5" fill="#777"/><circle cx="6" cy="6" r="2.500"/>', towerb: '<path d="M2 14V8l4-7 3 6v7z" fill="#7a93a8"/>',
      pipe: '<path d="M1 2h14v4q-6 0-8 4H1z" fill="#6d8ca3" stroke="#345"/>', gridr: '<path d="M1 4h14M1 11h14" stroke="#357" stroke-width="2"/><path d="M4 1v14M9 1v14" stroke="#911" stroke-width="3"/>',
      gridb: '<path d="M1 3h14M1 9h14M4 1v14M9 1v14" stroke="#8bb7d4" stroke-width="3" stroke-dasharray="3 1"/>',
      // ribbon, small
      storeys: '<path d="M4 1v14M9 1v14" stroke="#444"/><path d="M1 3h13M1 6h13M1 9h13M1 12h13" stroke="#222"/><path d="M13 1l2 2-2 2 2 2-2 2 2 2-2 3" stroke="#b22"/>',
      storeycopy: '<path d="M4 1h11l-3 3H1zM4 12h11l-3 3H1z" stroke="#911"/><path d="M8 5v6M6 7l2-2 2 2M6 9l2 2 2-2"/>',
      axc: '<path d="M13 3a6 6 0 1 0 0 10" stroke-dasharray="2 1"/><circle cx="9" cy="8" r="2"/>', axc2: '<path d="M13 3a6 6 0 1 0 0 10" stroke="#567"/>', axl: '<path d="M2 14L13 3" stroke="#bbb" stroke-width="2" stroke-dasharray="4 2"/>',
      corner: '<path d="M1 2h14v13h-5V7H1z" fill="#3e6f8c" stroke="#1d3d50"/><path d="M10 7l5-5" stroke="#9cc"/>',
      halfarch: '<path d="M2 2v11M2 4q8 0 9 7M9 11h5v3H9z" stroke="#345"/>', curve: '<path d="M2 13q0-9 4-6t3 5 5-7v-3" stroke="#2f5a77" stroke-width="3"/><path d="M2 13q0-9 4-6t3 5 5-7" stroke="#a9c6d8"/>',
      round: '<circle cx="8" cy="7" r="6" fill="#9db8c9" stroke="#2f4f63"/>', lpoly: '<path d="M2 4h12v6H9v4H3z" fill="#9db8c9" stroke="#2f4f63" stroke-width="1.500"/>',
      bend: '<path d="M3 15Q3 4 14 3" stroke="#6f93ab" stroke-width="4"/><path d="M8 15h7V8" stroke-dasharray="1 1"/>',
      ybeam: '<path d="M1 1h14v3H1zM1 12h14v3H1z" fill="#222" stroke="none"/><path d="M1 4h14v8H1z" fill="#f2ea28" stroke="#777"/><path d="M1 8h14"/>',
      updown: '<path d="M1 2h14v12H1zM8 2v12M1 8h14"/><path d="M5 4v8M3 6l2-2 2 2M3 10l2 2 2-2" stroke="#182"/>',
      lyel: '<path d="M3 2h6v4h5v8H3z" fill="#fff47a" stroke="#22a" stroke-width="1.500"/><path d="M11 1h4v4M1 11v4h4" stroke="#e22" stroke-width="1.500"/>',
      lines: '<path d="M1 3h14M1 7h14M1 11h10M3 14L13 2" stroke="#357"/>', xlines: '<path d="M1 5h14M1 10h14M5 1v14M10 1v14M2 14L13 2" stroke="#357"/>',
      seat: '<path d="M2 5q6-6 12-2v4H9v7M4 7v6M2 5h7" stroke="#567" fill="#c3d4df"/>', lred: '<path d="M2 2h4v4h9v8H2z" fill="#fff" stroke="#22a"/><path d="M6 5v7M9 5v7M12 5v7" stroke="#e22"/>',
      lred2: '<path d="M2 2h4v4h9v8H2z" fill="#fff" stroke="#22a"/><path d="M4 8h6l-3 4z" fill="#e22" stroke="none"/>', lstripe: '<path d="M2 2h5v4h7v9H2zM2 12h12" fill="#fff"/><path d="M2 6h9M2 9h12" stroke="#e22"/>',
      foot3: '<path d="M7 1h3v6l5 4-7 4-7-4 6-4z" fill="#7797ab" stroke="#2f4f63"/>', piles: '<path d="M1 2h14v3H1zM3 5h2v10H3zM7 5h2v10H7zM11 5h2v10h-2z" fill="#2f4f63" stroke="#2f4f63"/>', cap2: '<path d="M1 13v-4l3-5h8l3 5v4h-5v-4H6v4z" fill="#9db8c9" stroke="#2f4f63"/>',
      lwall: '<path d="M9 1h5v13H2v-4h7z" fill="#dce7ee" stroke="#2b4a63" stroke-width="1.500"/>', lpier: '<path d="M5 2h3v9h7v3H2v-3h3zM8 4l4 7" stroke="#2b4a63"/>',
      rdoc: '<path d="M3 2h7l3 3v9H3z" fill="#fff" stroke="#e22" stroke-width="1.500"/><path d="M5 6h4M5 9h6M5 11h6" stroke="#e22"/>'
    };
    const OVER = {
      brush: '<path d="M8 8l4 4" stroke="#a11" stroke-width="2"/><path d="M11 11l4 4" stroke="#00127a" stroke-width="3"/>',
      doc: '<path d="M7 7h6l2 2v6H7z" fill="#fff"/><path d="M9 11h3M9 13h5"/>',
      rdoc: '<path d="M7 7h6l2 2v6H7z" fill="#fff" stroke="#e22"/><path d="M9 11h3M9 13h4" stroke="#e22"/>',
      cy: '<path d="M11 0h5v5M0 11v5h5" stroke="#2fe3ec" stroke-width="1.500"/>',
      ye: '<path d="M11 0h5v5M0 11v5h5" stroke="#ecd92b" stroke-width="1.500"/>',
      r: '<path d="M3 4h8v3H3z" fill="#c77" stroke="#722"/>'
    };
    // Ribbon icons, 32 x 32
    const BIG = {
      gear: '<circle cx="16" cy="16" r="12" stroke="#35495a" stroke-width="6" stroke-dasharray="6 3.400"/><circle cx="16" cy="16" r="8" stroke="#4a6478" stroke-width="7"/><circle cx="16" cy="16" r="4" fill="#eef" stroke="none"/>',
      plan: '<path d="M1 4h30v25H1z" fill="#f4f6f8" stroke="#889" stroke-width="2"/><path d="M19 5v23M5 14l5-3h7v10l-4 3H5zM5 18h8l4-3M9 12v11M13 14v9M20 17h10M20 21h10M25 17v11M21 10h9M24 7v7" stroke="#456"/><circle cx="28" cy="6" r="1.500" fill="#e22" stroke="none"/>',
      axis: '<circle cx="20" cy="7" r="6" fill="#fff" stroke="#456"/><circle cx="7" cy="20" r="6" fill="#fff" stroke="#456"/><path d="M20 13v18M13 20h16" stroke="#456"/><text x="17" y="11" font-size="10" fill="#234" stroke="none">A</text><text x="4" y="24" font-size="10" fill="#234" stroke="none">1</text>',
      wall: '<path d="M3 12L22 1h8v18L9 31H3z" fill="#5f8097" stroke="#2b4050"/><path d="M9 14L30 3v16L9 31z" fill="#9ab5c6" stroke="#3a5163"/><path d="M9 20l21-11M9 25l21-11M15 11v6M22 13v6M16 21v6" stroke="#3a5163"/>',
      column: '<path d="M6 1h20v4q-5 2-5 10t5 12v4H6v-4q5-4 5-12T6 5z" fill="#8fb2c6" stroke="#476a80"/><path d="M13 4h3v24h-3z" fill="#dbe8ef" stroke="none"/>',
      beam: '<path d="M1 13h30v7H1z" fill="#8fb2c6" stroke="#345"/><path d="M6 20l-5 7h9zM26 20l-5 7h9z" fill="#4f7890" stroke="#345"/><path d="M13 1v11M9 8l4 4 4-4M21 9V1l6 8V1" stroke="#567"/>',
      shear: '<path d="M4 15l10-4 13 1v15L9 31H4z" fill="#7da6bd" stroke="#4f7890"/><path d="M7 13V5M14 12V2M20 12V4M27 12V0" stroke="#2f4f63" stroke-width="2"/>',
      slab: '<path d="M1 16L11 8h20l-8 10z" fill="#7fa8be" stroke="#446"/><path d="M4 18v10M13 18v12M23 18v11M29 12v10" stroke="#446b80" stroke-width="2"/>',
      slabedge: '<path d="M2 12L18 5l12 5-12 8z" stroke="#456" stroke-dasharray="2 2"/><path d="M18 18l12-5" stroke="#37566b" stroke-width="3"/><path d="M4 14v9M13 18v10M29 14v9" stroke="#6d8c9f" stroke-width="2"/>',
      stair: '<path d="M1 31v-5h5v-6h5v-6h6V8h6V1h8l-6 9v6h-5v6h-6v6H9z" fill="#5f8499" stroke="#37566b"/>',
      strip: '<path d="M1 31v-7l5-8V7l9-6h8v13l8 8v3l-9 6z" fill="#6f8ea3" stroke="#37566b"/><path d="M1 31v-7l5-8V8h9v8l6 8v7z" fill="#d5e2ea" stroke="#37566b"/>',
      raft: '<path d="M1 20l15-5 15 5-15 8z" fill="#7fa8be" stroke="#37566b"/><path d="M5 19V8M12 17V5M20 17V4M27 19V7M16 24V12" stroke="#4f7890" stroke-width="2"/>',
      raftedge: '<path d="M1 20l15-5 15 5-15 8z" stroke="#456" stroke-dasharray="2 2"/><path d="M16 28l15-8" stroke="#37566b" stroke-width="3"/><path d="M5 19V8M12 17V7M20 17V4M27 19V7" stroke="#6d8c9f"/>',
      scaffold: '<path d="M4 2v29M28 2v29M2 31h5M25 31h5" stroke="#111" stroke-width="2"/><path d="M4 6h24M4 9h24" stroke="#cb3" stroke-width="2"/><path d="M4 4h24M4 11h24M6 26l10-14 10 14M4 27h24" stroke="#111"/>',
      calcrc: '<path d="M1 2h26l4-1v30H1z" fill="#d5dadf" stroke="#888"/><path d="M6 7h20v18H6z" fill="#eef3f7" stroke="#346"/><path d="M6 7h20v4H6z" fill="#5a87a8" stroke="#346"/><path d="M6 15h20M6 20h20M11 11v14M16 11v14M21 11v14" stroke="#346"/>',
      calcst: '<path d="M3 1h26l-4 4H7zM3 31h26l-4-4H7z" fill="#eee" stroke="#999"/><path d="M6 7h20v18H6z" fill="#fffbe0" stroke="#a93"/><path d="M6 7h20v4H6z" fill="#d9c77a" stroke="#a93"/><path d="M6 15h20M6 20h20M11 11v14M16 11v14M21 11v14" stroke="#666"/>',
      pages: '<path d="M3 1h12l4 4v14H3z" fill="#fff" stroke="#222"/><path d="M8 7h12l4 4v14H8z" fill="#fff" stroke="#e22"/><path d="M14 13h11l5 4v14H14zM17 20h6M17 24h10M17 28h10" fill="#fff" stroke="#111" stroke-width="1.500"/>',
      coldoc: '<path d="M3 1h22v4l-3 3v16l3 4v3H3v-3l3-4V8L3 5z" fill="#ddd" stroke="#222"/><path d="M9 2v28M13 2v28M17 2v28" stroke="#777"/><path d="M15 16h10l5 4v11H15zM18 22h5M18 26h9" fill="#fff" stroke="#111" stroke-width="1.500"/>',
      steeldoc: '<path d="M2 30V12L11 2l6 9v19zM17 15l10-6v21H17z" fill="#9aa3b8" stroke="#556"/><path d="M16 16h9l6 4v11H16zM19 22h5M19 26h9" fill="#fff" stroke="#111" stroke-width="1.500"/>',
      drawrc: '<path d="M1 1h30v30H1z" fill="#aaa" stroke="#222" stroke-width="2"/><path d="M6 6h20v20H6z" fill="#ddd" stroke="#333"/><path d="M9 9h2M9 16h2M20 9l3-2M14 9h3M9 22h3"/><path d="M17 15l14 16" stroke="#f0a33a" stroke-width="5"/><path d="M16 14l3 4" stroke="#333" stroke-width="2"/>',
      drawst: '<path d="M1 1h30v4H18v22h13v4H1v-4h13V5H1z" fill="#c9b13c" stroke="#333"/><path d="M18 15l13 15" stroke="#f0a33a" stroke-width="5"/>',
      solid: '<path d="M5 6l10-4 13 4-12 5zM5 18l10-4 13 4-12 5zM5 6v22M16 11v20M28 6v22M15 2v12" stroke="#555" stroke-width="3"/><path d="M5 6l11 5 12-5M5 18l11 5 12-5" stroke="#ccc"/>',
      amodel: '<path d="M4 8l10-5 14 5-10 6z" fill="#6aa58a" stroke="#347"/><path d="M4 19l10-4 14 4-10 5z" fill="#dcd9f2" stroke="#347"/><path d="M4 8v20M18 14v17M28 8v20M14 3v20" stroke="#34669a"/>',
      wallm: '<path d="M7 6l8-4 12 5-9 5zM7 17l8-3 12 4-9 5z" fill="#f2a94c" stroke="#a62"/><path d="M7 5v21M18 12v19M27 7v21M15 3v12" stroke="#34669a" stroke-width="1.500"/><path d="M7 10l11 5 9-4M7 20l11 5 9-4" stroke="#f2a94c" stroke-width="3"/>',
      modal: '<path d="M3 3h20l8 5H12z" stroke="#394"/><path d="M3 3q2 12 0 25M12 6q4 12 1 24M23 3q5 12 2 26M31 8q2 10-1 20" stroke="#2a8aa5" stroke-width="1.500"/><path d="M4 15h24l3 3" stroke="#c35"/>',
      moment: '<path d="M4 2v27M28 2v27M4 6h24M4 18h24" stroke="#2a7ac0" stroke-width="2"/><path d="M7 6q9 12 18 0zM7 18q9 12 18 0z" fill="#1b8ad0" stroke="none"/><path d="M1 3l3 7 3-8M25 3l3 7 3-8M1 15l3 7 3-8M25 15l3 7 3-8" stroke="#e33"/>',
      bolt: '<path d="M14 1h17L20 12h7L4 31l8-14H6z" fill="#b5b53a" stroke="#444"/>'
    };

    function fill(svg, name) {
      const [base, over] = name.split(':');
      const big = svg.classList.contains('size-8');
      svg.setAttribute('viewBox', big ? '0 0 32 32' : '0 0 16 16');
      svg.setAttribute('fill', 'none');
      svg.setAttribute('stroke', '#222');
      svg.innerHTML = (big ? BIG[base] : ICON[base]) + (OVER[over] || '');
    }

    const dots = '<span class="w-[3px] h-4 mx-[3px] border-l-2 border-dotted border-[#9aa1ae] shrink-0"></span>';
    const more = '<span class="w-[13px] h-full flex items-end justify-center rounded-r bg-linear-to-b from-[#d0d4dc] to-[#a4a9b4] text-white text-[7px] shrink-0 mr-[2px]">▼</span>';

    document.querySelectorAll('[data-bar]').forEach(bar => {
      bar.innerHTML = dots + bar.dataset.bar.split(' ').map(n => n === '|'
        ? '<span class="w-2 grid place-items-center shrink-0"><i class="w-px h-4 bg-[#a9afbb]"></i></span>'
        : `<button class="w-[22px] h-[22px] grid place-items-center shrink-0" aria-label="${n}"><svg class="size-4" data-i="${n}"></svg></button>`).join('') + more;
    });
    document.querySelectorAll('[data-quick]').forEach(bar => {
      bar.innerHTML = bar.dataset.quick.split(' ').map(n => {
        if (n === '|') return '<span class="w-[5px] grid place-items-center"><i class="w-px h-4 bg-[#a9afbb]"></i></span>';
        if (n[0] === '*') return `<button class="w-[22px] h-5 grid place-items-center border border-[#c9a35a] bg-linear-to-b from-[#fdd9a0] to-[#ffc45e]" aria-label="${n.slice(1)}"><svg class="size-4" data-i="${n.slice(1)}"></svg></button>`;
        return `<button class="w-[22px] h-5 grid place-items-center" aria-label="${n}"><svg class="size-4" data-i="${n}"></svg></button>`;
      }).join('') + '<span class="w-4 text-[6px] text-[#555]">▼</span>';
    });
    document.querySelectorAll('[data-col]').forEach(col => {
      col.innerHTML = col.dataset.col.split(' ').map(n => {
        if (n === ':') return '<span class="h-[2px] w-3 my-1 border-t-2 border-dotted border-[#9aa1ae]"></span>';
        if (n === '-') return '<span class="h-2 w-4 grid items-center"><i class="h-[2px] bg-[#fafafa] border-t border-[#bbc]"></i></span>';
        if (n === ']') return '<span class="h-[11px] mt-[2px] w-full bg-[#a9aeb9] text-white text-[8px] leading-[11px] text-right pr-1 rounded-b">▶</span>';
        return `<button class="h-[21px] grid place-items-center" aria-label="${n}"><svg class="size-4" data-i="${n}"></svg></button>`;
      }).join('');
    });

    // Ribbon
    const arrow = '<span class="text-[6px] leading-[13px] text-[#666]">▼</span>';
    const big = (w, icon, l1, l2) => `<button class="${w} shrink-0 flex flex-col items-center pt-1 text-[11px] leading-[13px]"><svg class="size-8 mb-[3px] shrink-0" data-i="${icon}"></svg><span>${l1}</span><span>${l2 || arrow}</span></button>`;
    const small = (w, names) => `<span class="${w} shrink-0 flex flex-col items-center gap-[6px] pt-1">${names.split(' ').map(n => `<button aria-label="${n}"><svg class="size-4 block" data-i="${n}"></svg></button>`).join('')}</span>`;
    const rule = w => `<span class="${w} shrink-0 flex justify-center pt-[6px]"><i class="w-px h-14 bg-[#c3c7cf]"></i></span>`;
    const group = (w, title, body) => `<div class="${w} h-[85px] shrink-0 flex flex-col rounded border border-[#a3a7af] bg-linear-to-b from-[#f5f7fa] to-white overflow-hidden shadow-[1px_1px_0_#8f949e]"><div class="flex-1 flex">${body}</div><div class="h-[15px] text-center leading-[14px] bg-linear-to-b from-[#e6e8ed] to-[#c6cad3]">${title}</div></div>`;

    document.getElementById('ribbon').innerHTML =
      group('w-[209px]', 'Proje Ayarları', big('w-12', 'gear', 'Analiz', 'Ayarları') + big('w-[38px]', 'plan', 'Kat', 'listesi' + arrow) +
        `<div class="pl-1 pt-1 flex flex-col gap-[6px]">
          <button class="flex items-center gap-[3px]"><svg class="size-4" data-i="storeys"></svg>Kat Genel Ayarları</button>
          <button class="flex items-center gap-[3px]"><svg class="size-4" data-i="storeycopy"></svg>Kat Kopyala</button>
          <label class="flex items-center gap-[6px] pl-px h-4"><input type="checkbox" checked class="appearance-none size-3 border border-[#8a9099] bg-white bg-[linear-gradient(125deg,transparent_58%,#3c5a94_58%,#3c5a94_72%,transparent_72%),linear-gradient(50deg,transparent_32%,#3c5a94_32%,#3c5a94_46%,transparent_46%)] bg-size-[8px_8px] bg-center bg-no-repeat">Yarı Rijit</label>
        </div>`) +
      group('w-[76px]', 'Aks', big('w-12', 'axis', 'Aks') + small('w-5', 'axc axc2 axl')) +
      group('w-[76px]', 'Duvar', big('w-[50px]', 'wall', 'Duvar') + small('w-4', 'corner halfarch curve')) +
      group('w-[439px]', 'Betonarme', big('w-12', 'column', 'Kolon') + small('w-4', 'round lpoly funnel') + rule('w-4') + big('w-10', 'beam', 'Kiriş') + small('w-6', 'corner curve bend') + rule('w-[10px]') +
        big('w-11', 'shear', 'Perde') + rule('w-1') + big('w-[46px]', 'slab', 'Döşeme') + small('w-[26px]', 'ybeam updown lyel') + small('w-[26px]', 'lines xlines lstripe') + small('w-[26px]', 'seat lred lred2') +
        big('w-12', 'slabedge', 'Döşeme', 'Kenarı' + arrow) + rule('w-1') + big('w-[58px]', 'stair', 'Merdiven')) +
      group('w-[242px]', 'Temel - Zemin', big('w-12', 'strip', 'Sürekli', 'Temel ' + arrow) + small('w-4', 'foot3 piles cap2') +
        `<span class="w-5 flex flex-col items-center gap-[9px] pt-[6px]">${arrow}${arrow}${arrow}</span>` + rule('w-[2px]') + small('w-[30px]', 'lwall lpier') + rule('w-[2px]') +
        big('w-[50px]', 'raft', 'Radye') + small('w-4', 'ybeam updown lyel') + big('w-14', 'raftedge', 'Radye', 'Kenarı' + arrow)) +
      group('w-[77px]', 'İskele Ayarları', big('w-[75px]', 'scaffold', 'İskele', 'Makrosu ' + arrow)) +
      group('w-[109px]', 'Tasarım', big('w-16', 'calcrc', 'Betonarme') + big('w-[38px]', 'calcst', 'Çelik')) +
      group('w-[188px]', 'Raporlar', big('w-[54px]', 'pages', 'Seçmeli', 'Raporlar') + small('w-[18px]', 'redarr:doc redarr1:doc rdoc') + rule('w-2') + big('w-[62px]', 'coldoc', 'Betonarme') + big('w-10', 'steeldoc', 'Çelik')) +
      group('w-[109px]', 'Çizim Oluştur', big('w-16', 'drawrc', 'Betonarme') + big('w-[38px]', 'drawst', 'Çelik')) +
      group('w-[239px]', 'Analiz ve Tasarım Görüntüleme', big('w-12', 'solid', 'Katı', 'Model') + big('w-[38px]', 'amodel', 'Analiz', 'Modeli') + rule('w-1') + big('w-12', 'wallm', 'Duvar') + rule('w-[2px]') + big('w-12', 'modal', 'Modal') + big('w-[46px]', 'moment', 'Moment', '3-3' + arrow)) +
      group('w-[61px]', 'Analiz', big('w-[59px]', 'bolt', 'Analiz', 'Tasarım ' + arrow));

    document.querySelectorAll('svg[data-i]').forEach(s => fill(s, s.dataset.i));

    // Storey table: n, name, level, height, above foundation, hyk, rigid, lift, index
    const floors = [
      ['5', 'MERDİVEN KULESİ', '1870 cm', '350 cm', '2250 / 1850', '0.3', 0, 1, '6'],
      ['4', '4. KAT', '1520 cm', '300 cm', '1900 / 1500', '0.3', 0, 0, '4'],
      ['3', '3. KAT', '1220 cm', '300 cm', '1600 / 1200', '0.3', 0, 0, '3'],
      ['2', '2. KAT', '920 cm', '300 cm', '1300 / 900', '0.3', 0, 0, '2'],
      ['1', '1. KAT', '620 cm', '300 cm', '1000 / 600', '0.3', 0, 0, '1'],
      ['* 0', 'ZEMİN KAT', '320 cm', '300 cm', '700 / 300', '0.3', 0, 0, 'Z'],
      ['-1', '1. BODRUM', '20 cm', '400 cm', '400 / 0', '0.3', 1, 0, 'B'],
      ['G', 'Temel seviyesi', '-380 cm', '', '', '', 1, 0, '']
    ];
    const box = (on, label, color) => `<input type="checkbox" aria-label="${label}" ${on ? 'checked' : ''} class="block mx-auto appearance-none size-[10px] border border-current ${color} checked:bg-[linear-gradient(45deg,transparent_42%,currentColor_42%,currentColor_58%,transparent_58%),linear-gradient(-45deg,transparent_42%,currentColor_42%,currentColor_58%,transparent_58%)]">`;
    document.getElementById('floors').innerHTML = floors.map((f, i) => {
      const pad = f[0] === 'G' || f[0] === '* 0' ? 'pl-[7px]' : 'pl-[14px]';
      const color = i ? 'text-black' : 'text-[#0b7d7b]';
      return `<tr class="h-[19px] [&>td]:border-r [&>td]:border-b [&>td]:border-[#c0c0c0] ${i ? '' : 'bg-[#12e8e4] text-[#033f3e]'}">
        <td class="text-left text-black bg-white ${pad}">${f[0]}</td><td class="text-left pl-2">${f[1]}</td>
        <td>${f[2]}</td><td>${f[3]}</td><td>${f[4]}</td><td>${f[5]}</td>
        <td>${box(f[6], 'Rijit ' + f[1], color)}</td><td>${box(f[7], 'Asansör ' + f[1], color)}</td><td>${f[8]}</td></tr>`;
    }).join('');

    // Perspective model: [points, fill, stroke], painted back to front
    const faces = [
      ['115,1115 220,1107 610,1160 440,1200 380,1225 115,1300', '#dcdce9', 'none'],
      // distant block
      ['1015,1070 1145,1040 1415,1050 1415,1165 1160,1120 1015,1105', '#d4d4d4'],
      ['1147,928 1215,926 1220,1070 1143,1070', '#b5b5b5'], ['1215,926 1363,922 1363,945 1222,948', '#fff'], ['1341,945 1363,945 1357,1078 1337,1078', '#ccc'], ['1208,930 1222,930 1225,1070 1215,1070', '#888'],
      ['1012,1105 1415,1130 1415,1170 1012,1140', '#fff'], ['1012,1140 1415,1190 1415,1215 1012,1165', '#bbb'], ['1012,1165 1415,1210 1415,1320 1005,1265', '#fff'],
      ['1010,1265 1370,1315 1370,1345 1010,1290', '#ddd'], ['1007,1290 1415,1350 1415,1520 1005,1430', '#fff'],
      ['1045,1352 1340,1410 1333,1510 1000,1440', '#e4e4e4'], ['1055,1395 1335,1440 1330,1500 1020,1430', '#fff'],
      ['1003,1430 1415,1530 1415,1555 1003,1455', '#fff'], ['1003,1480 1345,1575 1340,1690 1000,1610', '#fbfbfb', '#aaa'], ['1000,1620 1312,1715 1310,1750 998,1650', '#e6e6e6', '#999'],
      ['995,1690 1310,1750 1300,2000 975,1810', '#fdfdfd', '#bbb'], ['1385,1220 1415,1230 1415,2060 1295,2000', '#fff', '#777'],
      // mid slabs and beams
      ['380,1225 735,1130 880,1150 880,1300 690,1340 420,1440 380,1440', '#f0f0f0', '#777'],
      ['435,1205 735,1130 780,1135 515,1215', '#cfcfcf'], ['515,1180 870,1240 870,1258 515,1200', '#fff'], ['385,1265 495,1240 630,1270 590,1325 385,1280', '#a5a5a5'],
      ['460,1290 520,1270 620,1290 590,1325', '#e8e8f2', 'none'],
      ['380,1280 610,1330 620,1350 440,1425 380,1400', '#f7f7f7', '#777'], ['605,1340 870,1230 870,1260 425,1470 425,1440', '#c8c8c8', '#555'],
      ['610,1345 870,1400 870,1420 610,1375', '#d5d5d5', '#777'], ['610,1375 870,1430 870,1600 610,1510', '#e6e6e6', '#999'], ['705,1450 865,1490 865,1590 700,1545', '#f6f6f6', '#aaa'],
      // left walls
      ['20,765 36,765 50,1640 20,1640', '#9b9b9b'], ['36,765 100,750 122,1430 122,1565 60,1620', '#aaa'], ['100,750 188,768 198,1180 115,1205', '#bebebe'],
      ['188,768 198,768 206,1185 198,1185', '#f2f2f2'], ['198,768 372,730 380,1222 205,1185', '#cfcfcf'], ['205,1110 380,1135 380,1222 205,1185', '#c3c3cd', 'none'],
      ['372,730 408,740 408,825 435,825 437,1440 380,1455', '#b7b7b7'], ['408,822 432,825 437,1200 418,1200', '#d6d6d6'],
      ['115,1205 198,1182 375,1220 120,1275', '#ececec', '#777'], ['20,1250 118,1275 122,1435 20,1360', '#c6c6c6', '#888'],
      ['100,1280 372,1213 378,1220 118,1278', '#fff'], ['118,1280 380,1220 380,1345 122,1436', '#9a9a9a'], ['95,1275 118,1278 122,1436 97,1425', '#c9c9c9'],
      ['122,1436 206,1405 210,1510 128,1550', '#999', '#666'], ['206,1405 235,1398 375,1450 210,1510', '#c5c5c5', '#888'], ['235,1398 380,1350 420,1430 380,1455', '#f6f6f6', '#777'],
      // cross beams
      ['128,1545 350,1450 410,1450 130,1580', '#fff'], ['70,1605 410,1450 420,1480 130,1650', '#c4c4c4', '#777'], ['130,1650 415,1480 530,1490 190,1690', '#d9d9d9', '#888'],
      ['190,1690 530,1490 533,1520 225,1712', '#b4b4b4'], ['225,1712 385,1620 385,1830', '#e2e2e2', '#999'], ['385,1650 600,1780 600,1800 440,1720', '#ccc', '#666'],
      ['440,1640 470,1565 595,1625 595,1770', '#fff', '#888'], ['440,1720 595,1800 485,1905 440,1870', '#fafafa', '#888'],
      ['485,1905 605,1790 625,1800 505,1925', '#f5f5f5'], ['505,1925 620,1805 625,1860 545,1965', '#cdcdcd'],
      ['415,1440 615,1510 895,1630 975,1665 860,1745 415,1540', '#fff', '#666'], ['680,1523 895,1635 850,1750 682,1680', '#b9b9b9', '#666'], ['615,1515 682,1530 682,1850 610,1800', '#b0b0b0', '#666'],
      ['420,1440 615,1495 870,1590 870,1620 615,1525', '#cdcdcd', '#555'], ['695,1680 712,1685 712,1835 695,1845', '#8f8f8f'], ['712,1685 850,1745 780,1880 712,1835', '#fafafa', '#777'],
      ['605,1800 710,1835 840,1910 835,1950 610,1830', '#c0c0c0', '#888'], ['615,1830 770,1900 655,2030 610,2000', '#e5e5e5', '#888'],
      // centre column and opening
      ['614,577 687,560 682,2100 610,2050', '#c8c8c8aa', '#777'], ['687,690 862,650 890,760 878,1300 687,1300', '#b5b5b5aa', '#666'], ['687,1300 878,1300 870,1600 682,1530', '#cfcfcf55', 'none'],
      // right bay
      ['868,1850 895,1815 1250,1980 1235,2040', '#fff'], ['868,1845 1235,2035 1285,2135 1280,2200 865,2025', '#fff', '#777'], ['865,2025 1280,2200 1230,2349 960,2349 955,2070', '#fafafa', '#999'],
      ['1250,1980 1415,2060 1415,2140 1235,2065', '#fff'], ['1285,2075 1415,2140 1415,2349 1257,2349', '#fff', '#777'], ['865,2025 887,2035 885,2349 850,2320', '#adadad', '#888'], ['965,2090 980,2098 973,2349 958,2349', '#d0d0d0', '#999'],
      // roof frame
      ['690,250 1012,573 926,487 865,503 617,290', '#dadada'], ['665,335 865,503 865,550 665,398', '#dcdcdc'], ['617,290 665,335 662,602 617,577', '#acacac'],
      ['20,748 614,577 662,602 20,765', '#f3f3f3'], ['100,750 370,703 407,712 407,740 372,730 188,768', '#e3e3e3'], ['407,712 862,610 862,648 407,740', '#dcdcdc', '#777'],
      ['408,822 886,757 886,770 432,826', '#c9c9c9', '#555'],
      ['886,700 922,700 895,1640 866,1610', '#c2c2c2', '#666'], ['922,700 1008,740 977,1665 895,1632', '#fff'], ['1008,740 1012,573 1030,588 995,1645 977,1665', '#979797'],
      ['865,503 926,487 922,690 862,702', '#cfcfcf'], ['926,487 1014,575 1008,740 922,690', '#9b9b9b'], ['862,702 922,690 1008,740 955,747', '#eee'],
      // foreground beams
      ['840,1775 930,1650 977,1665 892,1800', '#ffffffcc'], ['892,1800 995,1645 995,1700 895,1850', '#bdbdbd'],
      ['612,2090 840,1775 895,1803 675,2145', '#d4d4d480', '#333'], ['675,2145 892,1803 868,1900 677,2215', '#dddddd99', '#444'],
      ['20,1760 150,1870 410,2140 609,2349 20,2349', '#cfcfcf', 'none'], ['60,1830 330,2050 100,2250 50,2120', '#e4e4e4', '#aaa'], ['150,2230 360,2075 600,2330 330,2349 150,2349', '#fafafa', '#aaa'], ['70,2240 310,2030 330,2050 90,2270', '#bdbdbd', '#999'], ['20,1800 110,1940 60,2000 20,1900', '#999', '#888'],
      ['25,1625 70,1605 652,2033 610,2090', '#fff'], ['25,1625 610,2090 675,2145 677,2215 608,2315 30,1760', '#fdfdfd', '#666'],
      ['610,2090 652,2033 655,2230 608,2349', '#c0c0c0aa', '#777'], ['675,2215 850,2320 850,2349 660,2349', '#a9a9a9', '#888'], ['677,2170 850,2000 850,2320 677,2215', '#f7f7f7', '#aaa']
    ];
    const edges = [
      'M20 583L690 250L1030 588', 'M617 290L865 503M617 290V577M690 250L676 2145', 'M614 577L608 2330M198 768L206 1185M100 750L122 1436M36 765L60 1600M372 730L387 1830M408 740L418 1850M435 826L441 1870',
      'M25 1667L675 2215M868 1845L1285 2075M868 1898L1285 2135L1415 2200M1250 1980L1230 2349M1415 1225L1407 2055',
      'M1012 1085L1415 1145M1012 1095L1180 1060L1415 1075M1040 1050L1400 1110M1080 1060L1415 1090M1130 1045L1020 1130M1180 1055L1090 1125M1240 1060L1160 1125M1300 1060L1230 1130M1360 1065L1310 1140M1012 1075L1415 1120M1060 1055L1415 1100',
      'M1015 1180L1415 1205M1015 1173L1415 1198M1060 1145V1165M1090 1150V1170M1105 1150V1172M1140 1155V1178M1190 1160V1180M1210 1165V1184M1250 1170V1188M1290 1172V1190M1340 1180V1200M1360 1182V1203',
      'M1045 1352L1000 1440M1055 1372L1340 1430M1050 1395L1340 1450M1050 1410L1335 1470M1045 1425L1335 1485M1040 1440L1335 1500M1340 1410V1510M1150 1370V1420M1190 1385V1430'
    ];
    const mid = ['M852 830L842 1200L845 1880M862 702L857 1200L840 1775M882 770L860 1700M735 1130L420 1235M780 1135L450 1260M870 1155L615 1215L425 1300M820 1140L870 1150M515 1185L600 1205L870 1240M600 1220V1800M705 1360L700 1500M780 1330V1380'];
    const faint = ['M1010 1240L1400 1300M1150 1240V1320M1180 1245V1330M1010 1400L1340 1490M1120 1560L1150 1640L1310 1690M1020 1700L1300 1800M1010 1740L1300 1850M1000 1790L1300 1920M1010 1760L1300 1880M1040 1560V1620M1150 1840V1900M1200 1850L1180 1920M1000 2110L1220 2240M1010 2150L1225 2290M1000 2090L990 2349M1030 2120L1015 2349',
      'M40 2000L140 2110L60 2200M50 1860L140 2150M200 1880V2349M395 2150V2349M440 2200V2349M590 1780V2320M700 1900L690 2230M740 1950L830 2200M800 1980L780 2260M200 2349L430 2170M280 2349L470 2220M360 2349L510 2260', 'M440 1660L590 1700M450 1690L590 1740M480 1600L470 1720M520 1600L510 1740M560 1620L550 1750'];
    const line = (d, color) => `<path d="${d}" vector-effect="non-scaling-stroke" stroke="${color}"/>`;
    document.getElementById('model').innerHTML =
      faces.map(([p, f, s]) => `<polygon points="${p}" fill="${f}" stroke="${s || '#333'}" vector-effect="non-scaling-stroke"/>`).join('') +
      edges.map(d => line(d, '#222')).join('') + mid.map(d => line(d, '#888')).join('') + faint.map(d => line(d, '#ccc')).join('') +
      '<path d="M20 1395L65 1423V1448L20 1465M20 1547L65 1582V1605" stroke="#ee3c58" stroke-width="4" vector-effect="non-scaling-stroke"/>';
  </script>
</body>
</html>
